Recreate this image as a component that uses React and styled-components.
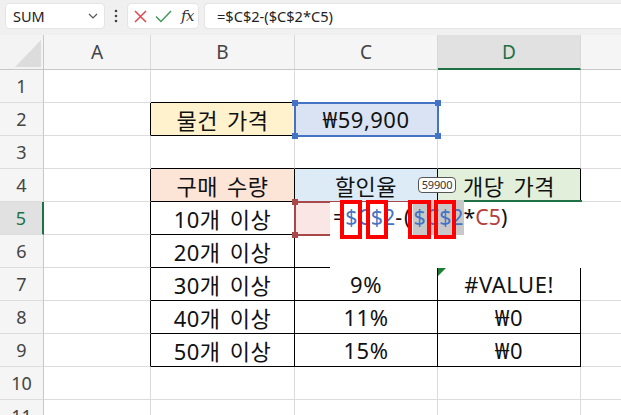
import React from 'react';
import styled, { createGlobalStyle } from 'styled-components';

const Global = createGlobalStyle`
  html, body { margin: 0; padding: 0; background: #fff; overflow: hidden; }
  body { width: 621px; height: 415px; }
`;

const GRID = '#dcdcdc';
const BLACK = '#000';
const GREEN = '#1f7145';
const CELL_FONT = '"Noto Sans", "Noto Sans CJK KR", sans-serif';

const Page = styled.div`
  width: 621px;
  height: 415px;
  overflow: hidden;
  display: flex;
  flex-direction: column;
  font-family: "Noto Sans", "Open Sans", sans-serif;
`;

const Toolbar = styled.div`
  flex: none;
  height: 35px;
  box-sizing: border-box;
  background: #f0f0f0;
  display: flex;
  align-items: flex-start;
  padding: 3px 0 0 5px;
`;

const Box = styled.div`
  height: 26px;
  box-sizing: border-box;
  background: #fff;
  border: 1px solid #e4e4e4;
  border-radius: 4px;
  display: flex;
  align-items: center;
`;

const NameBox = styled(Box)`
  width: 100px;
  justify-content: space-between;
  padding: 0 6px 0 7px;
  font-size: 14.5px;
  color: #222;
`;

const DotsWrap = styled.div`
  width: 22px;
  height: 26px;
  display: flex;
  align-items: center;
  justify-content: center;
`;

const FxBox = styled(Box)`
  width: 72px;
  padding: 0 4px 0 6px;
  justify-content: space-between;
`;

const Fx = styled.span`
  font-family: "DejaVu Serif", "Liberation Serif", serif;
  font-style: italic;
  font-size: 15px;
  color: #333;
  letter-spacing: -0.5px;
`;

const FormulaBox = styled(Box)`
  flex: 1;
  margin-left: 5px;
  padding-left: 12px;
  font-size: 14.6px;
  color: #222;
  border-right: none;
  border-radius: 4px 0 0 4px;
`;

const Sheet = styled.div`
  position: relative;
  flex: 1;
  display: grid;
  grid-template-columns: 44px 107px 144px 143px 143px 143px;
  grid-template-rows: 35px repeat(11, 33px);
  background: #fff;
`;

const Corner = styled.div`
  background: #f3f3f3;
  border-right: 1px solid #c8c8c8;
  border-bottom: 1px solid #c8c8c8;
  box-sizing: border-box;
  position: relative;
`;

const ColHead = styled.div`
  box-sizing: border-box;
  background: ${p => (p.$active ? '#e1e1e1' : '#f5f5f5')};
  border-right: 1px solid #d8d8d8;
  border-bottom: ${p => (p.$active ? `2px solid ${GREEN}` : '1px solid #c8c8c8')};
  color: ${p => (p.$active ? GREEN : '#444')};
  font-size: 19px;
  display: flex;
  align-items: center;
  justify-content: center;
  padding-top: ${p => (p.$active ? '1px' : '0')};
`;

const RowHead = styled.div`
  box-sizing: border-box;
  background: ${p => (p.$active ? '#e1e1e1' : '#f5f5f5')};
  border-right: ${p => (p.$active ? `2px solid ${GREEN}` : '1px solid #c8c8c8')};
  border-bottom: 1px solid #dcdcdc;
  color: ${p => (p.$active ? GREEN : '#444')};
  font-size: 18px;
  display: flex;
  align-items: center;
  justify-content: center;
`;

const Cell = styled.div`
  position: relative;
  box-sizing: border-box;
  background: ${p => p.$bg || '#fff'};
  border-right: 1px solid ${p => p.$right};
  border-bottom: 1px solid ${p => p.$bottom};
  font-family: ${CELL_FONT};
  font-size: 22px;
  letter-spacing: 0.5px;
  word-spacing: 3px;
  color: #111;
  display: flex;
  align-items: center;
  justify-content: center;
  white-space: nowrap;
`;

const ErrFlag = styled.svg`
  position: absolute;
  left: 0;
  top: 0;
`;

const Range = styled.div`
  position: absolute;
  box-sizing: border-box;
  left: ${p => p.$x}px;
  top: ${p => p.$y}px;
  width: ${p => p.$w}px;
  height: ${p => p.$h}px;
  border: 2px solid ${p => p.$color};
  background: ${p => p.$fill || 'transparent'};
`;

const Handle = styled.div`
  position: absolute;
  width: 6px;
  height: 6px;
  background: ${p => p.$color};
  ${p => (p.$top ? 'top: -4px;' : 'bottom: -4px;')}
  ${p => (p.$left ? 'left: -4px;' : 'right: -4px;')}
`;

const ActiveTop = styled.div`
  position: absolute;
  left: 438px;
  top: 165px;
  width: 144px;
  height: 2px;
  background: ${GREEN};
`;

const Editor = styled.div`
  position: absolute;
  left: 330px;
  top: 167px;
  width: 291px;
  height: 66px;
  background: #fff;
  box-sizing: border-box;
  padding-left: 3px;
  font-family: "Noto Sans", sans-serif;
  font-size: 21.3px;
  line-height: 33px;
  color: #111;
  white-space: nowrap;
`;

const Line = styled.div`
  height: 33px;
  display: flex;
  align-items: flex-start;
  position: relative;
  top: -2px;
`;

const Tok = styled.span`
  display: inline-block;
  height: 35px;
  line-height: 33px;
  color: ${p => p.$color || '#111'};
  background: ${p => (p.$sel ? '#c8c8c8' : 'transparent')};
  letter-spacing: ${p => p.$spread || 0}px;
  padding-right: ${p => p.$pad || 0}px;
`;

const Mark = styled.span`
  position: relative;
  display: inline-block;
  &::after {
    content: '';
    position: absolute;
    left: -5px;
    right: -5px;
    top: 0;
    height: 39px;
    border: 4px solid #ff0000;
    box-sizing: border-box;
  }
`;

const Tip = styled.div`
  position: absolute;
  left: 418px;
  top: 142px;
  width: 38px;
  height: 16px;
  box-sizing: border-box;
  border: 1px solid #555;
  border-radius: 4px;
  background: #fff;
  font-family: "Noto Sans", sans-serif;
  font-size: 11px;
  line-height: 14px;
  color: #333;
  text-align: center;
  letter-spacing: -0.2px;
`;

const COLS = ['A', 'B', 'C', 'D', 'E'];

const DATA = {
  '2B': { t: '물건 가격', bg: '#fff2cc' },
  '2C': { t: '₩59,900', bg: '#dae3f3' },
  '4B': { t: '구매 수량', bg: '#fce4d6' },
  '4C': { t: '할인율', bg: '#ddebf7' },
  '4D': { t: '개당 가격', bg: '#e2efda' },
  '5B': { t: '10개 이상' },
  '6B': { t: '20개 이상' },
  '7B': { t: '30개 이상' },
  '7C': { t: '9%' },
  '7D': { t: '#VALUE!', err: true },
  '8B': { t: '40개 이상' },
  '8C': { t: '11%' },
  '8D': { t: '₩0' },
  '9B': { t: '50개 이상' },
  '9C': { t: '15%' },
  '9D': { t: '₩0' },
};

const bordered = (r, ci) => {
  const c = COLS[ci];
  if (r === 2 && c === 'B') return true;
  if (r >= 4 && r <= 9 && ['B', 'C', 'D'].includes(c)) return true;
  return false;
};

function ChevronDown() {
  return (
    <svg width="10" height="6" viewBox="0 0 10 6">
      <path d="M1 1 L5 5 L9 1" fill="none" stroke="#555" strokeWidth="1.2" />
    </svg>
  );
}

function VDots() {
  return (
    <svg width="4" height="14" viewBox="0 0 4 14">
      <circle cx="2" cy="2" r="1.3" fill="#444" />
      <circle cx="2" cy="7" r="1.3" fill="#444" />
      <circle cx="2" cy="12" r="1.3" fill="#444" />
    </svg>
  );
}

function Cross() {
  return (
    <svg width="13" height="13" viewBox="0 0 13 13">
      <path d="M1 1 L12 12 M12 1 L1 12" stroke="#e0474c" strokeWidth="1.5" fill="none" />
    </svg>
  );
}

function Check() {
  return (
    <svg width="17" height="13" viewBox="0 0 17 13">
      <path d="M1 6.5 L6 11.5 L16 1" stroke="#3f9a5a" strokeWidth="1.5" fill="none" />
    </svg>
  );
}

function CornerTriangle() {
  return (
    <svg width="44" height="35" viewBox="0 0 44 35" style={{ position: 'absolute', left: 0, top: 0 }}>
      <polygon points="15,32 41,32 41,5" fill="#dcdcdc" />
    </svg>
  );
}

export default function App() {
  const rows = [];
  for (let r = 1; r <= 11; r++) {
    rows.push(
      <RowHead key={`h${r}`} $active={r === 5}>{r}</RowHead>
    );
    COLS.forEach((c, ci) => {
      const d = DATA[`${r}${c}`] || {};
      const right = bordered(r, ci) || bordered(r, ci + 1) ? BLACK : GRID;
      const bottom = bordered(r, ci) || bordered(r + 1, ci) ? BLACK : GRID;
      rows.push(
        <Cell key={`${r}${c}`} $bg={d.bg} $right={right} $bottom={bottom}>
          {d.err && (
            <ErrFlag width="8" height="8" viewBox="0 0 8 8">
              <polygon points="0,0 8,0 0,8" fill="#1d7d33" />
            </ErrFlag>
          )}
          {d.t}
        </Cell>
      );
    });
  }

  return (
    <Page>
      <Global />
      <Toolbar>
        <NameBox>
          <span>SUM</span>
          <ChevronDown />
        </NameBox>
        <DotsWrap><VDots /></DotsWrap>
        <FxBox>
          <Cross />
          <Check />
          <Fx>fx</Fx>
        </FxBox>
        <FormulaBox>=$C$2-($C$2*C5)</FormulaBox>
      </Toolbar>
      <Sheet>
        <Corner><CornerTriangle /></Corner>
        {COLS.map(c => (
          <ColHead key={c} $active={c === 'D'}>{c === 'E' ? '' : c}</ColHead>
        ))}
        {rows}

        <Range $x={294} $y={67} $w={145} $h={35} $color="#4472c4">
          <Handle $color="#4472c4" $top $left />
          <Handle $color="#4472c4" $top />
          <Handle $color="#4472c4" $left />
          <Handle $color="#4472c4" />
        </Range>

        <Range $x={294} $y={166} $w={145} $h={35} $color="#a8484a" $fill="#fbe6e6">
          <Handle $color="#a8484a" $top $left />
          <Handle $color="#a8484a" $left />
        </Range>

        <ActiveTop />

        <Editor>
          <Line>
            <Tok>=</Tok>
            <Tok $color="#4472c4"><Mark>$</Mark>C<Mark>$</Mark>2</Tok>
            <Tok $spread={2} $pad={1}>-(</Tok>
            <Tok $color="#4472c4" $sel><Mark>$</Mark>C<Mark>$</Mark>2</Tok>
            <Tok>*</Tok>
            <Tok $color="#b53f3f">C5</Tok>
            <Tok>)</Tok>
          </Line>
        </Editor>

        <Tip>59900</Tip>
      </Sheet>
    </Page>
  );
}
